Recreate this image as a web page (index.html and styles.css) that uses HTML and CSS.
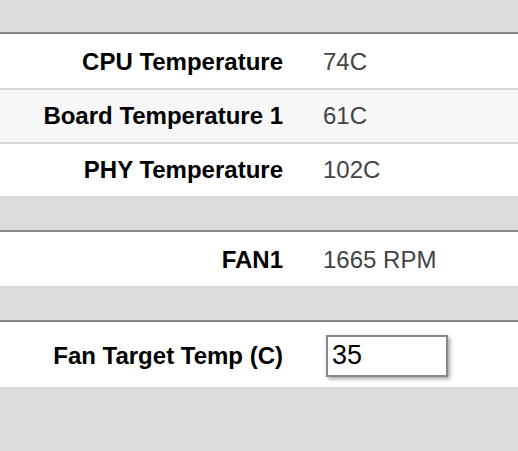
FILE: index.html
```html
<!DOCTYPE html>
<html>
<head>
<meta charset="utf-8">
<link rel="stylesheet" href="styles.css">
</head>
<body>
<div class="page">
  <section class="panel">
    <div class="row">
      <div class="label">CPU Temperature</div>
      <div class="value">74C</div>
    </div>
    <div class="row alt">
      <div class="label">Board Temperature 1</div>
      <div class="value">61C</div>
    </div>
    <div class="row">
      <div class="label">PHY Temperature</div>
      <div class="value">102C</div>
    </div>
  </section>
  <section class="panel">
    <div class="row">
      <div class="label">FAN1</div>
      <div class="value">1665 RPM</div>
    </div>
  </section>
  <section class="panel">
    <div class="row tall">
      <div class="label">Fan Target Temp (C)</div>
      <div class="value"><input class="num" type="text" value="35"></div>
    </div>
  </section>
</div>
</body>
</html>
```

FILE: styles.css
```css
html, body {
  margin: 0;
  padding: 0;
  background: #dcdcdc;
  font-family: "Liberation Sans", Arial, sans-serif;
}
.page {
  padding-top: 32px;
  display: flex;
  flex-direction: column;
  gap: 32px;
}
.panel {
  border-top: 2px solid #898989;
  padding-top: 2px;
  background: #ffffff;
}
.row {
  display: grid;
  grid-template-columns: 303px 1fr;
  align-items: center;
  height: 52px;
  border-bottom: 2px solid #d9d9d9;
  background: #ffffff;
}
.row.alt {
  background: #f7f7f7;
}
.row.tall {
  height: 63px;
  border-bottom: none;
}
.label {
  text-align: right;
  padding-right: 20px;
  font-weight: bold;
  font-size: 24px;
  color: #000;
}
.value {
  padding-left: 20px;
  font-size: 24px;
  color: #444;
}
.num {
  margin-left: 3px;
  width: 122px;
  height: 42px;
  box-sizing: border-box;
  border: 2px solid #888;
  box-shadow: 2px 2px 4px rgba(0,0,0,0.35);
  font-family: "Liberation Sans", Arial, sans-serif;
  font-size: 27px;
  color: #000;
  padding: 0 4px;
  outline: none;
  display: block;
}
```
